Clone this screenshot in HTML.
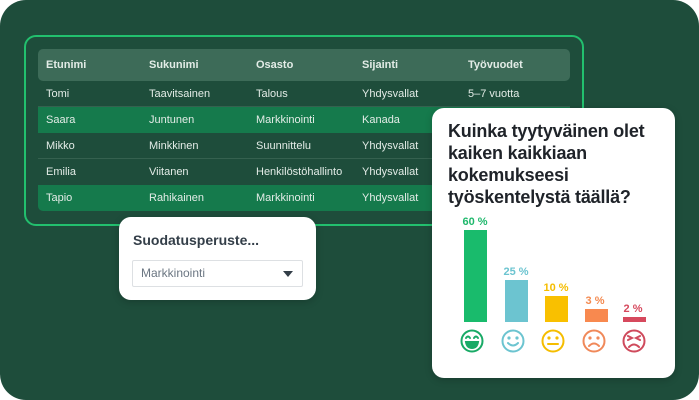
<!DOCTYPE html><html><head><style>
body{margin:0;width:699px;height:400px;background:#fff;font-family:"Liberation Sans",sans-serif;overflow:hidden}
.bg{position:absolute;left:0;top:0;width:699px;height:400px;background:#1e4d3b;border-radius:26px}
.tbl{position:absolute;left:24px;top:35px;width:556px;height:187px;border:2px solid #22c06e;border-radius:12px}
.hdr{position:absolute;left:38px;top:49px;width:532px;height:32px;background:#3d6b58;border-radius:5px}
.row{position:absolute;left:38px;width:532px;height:26px}
.hl{background:#157a4c}
.line{border-bottom:1px solid #35614f}
.c{position:absolute;font-size:11px;color:#e3ece7;line-height:26px}
.h{font-weight:bold;line-height:32px;font-size:11px}
.card{position:absolute;background:#fff;border-radius:12px;box-shadow:0 2px 8px rgba(0,0,0,.2)}
.lbl{position:absolute;font-size:11px;font-weight:bold;text-align:center;width:40px}
.bar{position:absolute;width:23px;bottom:56px}
</style></head><body>
<div class="bg"></div>
<div class="tbl"></div>
<div class="hdr"></div>
<div class="row line" style="top:81px;height:25px"></div>
<div class="row hl" style="top:107px"></div>
<div class="row line" style="top:133px;height:25px"></div>
<div class="row" style="top:159px"></div>
<div class="row hl" style="top:185px;border-radius:0 0 5px 5px"></div>
<div class="c h" style="left:46px;top:49px">Etunimi</div><div class="c h" style="left:149px;top:49px">Sukunimi</div><div class="c h" style="left:256px;top:49px">Osasto</div><div class="c h" style="left:362px;top:49px">Sijainti</div><div class="c h" style="left:468px;top:49px">Työvuodet</div>
<div class="c" style="left:46px;top:81px">Tomi</div><div class="c" style="left:149px;top:81px">Taavitsainen</div><div class="c" style="left:256px;top:81px">Talous</div><div class="c" style="left:362px;top:81px">Yhdysvallat</div><div class="c" style="left:468px;top:81px">5–7 vuotta</div>
<div class="c" style="left:46px;top:107px">Saara</div><div class="c" style="left:149px;top:107px">Juntunen</div><div class="c" style="left:256px;top:107px">Markkinointi</div><div class="c" style="left:362px;top:107px">Kanada</div>
<div class="c" style="left:46px;top:133px">Mikko</div><div class="c" style="left:149px;top:133px">Minkkinen</div><div class="c" style="left:256px;top:133px">Suunnittelu</div><div class="c" style="left:362px;top:133px">Yhdysvallat</div>
<div class="c" style="left:46px;top:159px">Emilia</div><div class="c" style="left:149px;top:159px">Viitanen</div><div class="c" style="left:256px;top:159px">Henkilöstöhallinto</div><div class="c" style="left:362px;top:159px">Yhdysvallat</div>
<div class="c" style="left:46px;top:185px">Tapio</div><div class="c" style="left:149px;top:185px">Rahikainen</div><div class="c" style="left:256px;top:185px">Markkinointi</div><div class="c" style="left:362px;top:185px">Yhdysvallat</div>

<div class="card" style="left:119px;top:217px;width:197px;height:83px">
<div style="position:absolute;left:14px;top:15px;font-size:14px;font-weight:bold;color:#333e48">Suodatusperuste...</div>
<div style="position:absolute;left:13px;top:43px;width:169px;height:25px;border:1px solid #dde0e3;border-radius:2px;font-size:12px;color:#6b7682;line-height:25px;text-indent:8px">Markkinointi<div style="position:absolute;right:9px;top:10px;width:0;height:0;border-left:5px solid transparent;border-right:5px solid transparent;border-top:6px solid #333e48"></div></div>
</div>

<div class="card" style="left:432px;top:108px;width:243px;height:270px">
<div style="position:absolute;left:16px;top:12px;font-size:18px;font-weight:bold;color:#1f2329;line-height:22px;letter-spacing:-0.2px">Kuinka tyytyväinen olet<br>kaiken kaikkiaan<br>kokemukseesi<br>työskentelystä täällä?</div>
<div class="lbl" style="left:23px;top:108px;color:#1fb86c">60 %</div>
<div class="bar" style="left:32px;height:92px;background:#19bb6c"></div>
<div class="lbl" style="left:64px;top:158px;color:#6cc4d0">25 %</div>
<div class="bar" style="left:73px;height:42px;background:#6cc4d0"></div>
<div class="lbl" style="left:104px;top:174px;color:#f5bd00">10 %</div>
<div class="bar" style="left:113px;height:26px;background:#f9c000"></div>
<div class="lbl" style="left:143px;top:187px;color:#f48a50">3 %</div>
<div class="bar" style="left:153px;height:13px;background:#f8894f"></div>
<div class="lbl" style="left:181px;top:195px;color:#d6495d">2 %</div>
<div class="bar" style="left:191px;height:5px;background:#d6495d"></div>
<svg style="position:absolute;left:0;top:0" width="243" height="270" fill="none" stroke-width="2" stroke-linecap="round">
<g stroke="#19aa66" transform="translate(40,233)"><circle r="10.5"/><path d="M-6 -3q2-3 4 0M2 -3q2-3 4 0"/><path d="M-6 1h12q-1 6-6 6t-6-6z" fill="#19aa66"/></g>
<g stroke="#6cc4d0" transform="translate(81,233)"><circle r="10.5"/><circle cx="-4" cy="-3" r=".6" fill="#6cc4d0"/><circle cx="4" cy="-3" r=".6" fill="#6cc4d0"/><path d="M-5 2q5 5 10 0"/></g>
<g stroke="#f5bd00" transform="translate(121,233)"><circle r="10.5"/><circle cx="-4" cy="-3" r=".6" fill="#f5bd00"/><circle cx="4" cy="-3" r=".6" fill="#f5bd00"/><path d="M-5 3h10"/></g>
<g stroke="#f0895a" transform="translate(162,233)"><circle r="10.5"/><circle cx="-4" cy="-3" r=".6" fill="#f0895a"/><circle cx="4" cy="-3" r=".6" fill="#f0895a"/><path d="M-5 5q5-5 10 0"/></g>
<g stroke="#cf4a5c" transform="translate(202,233)"><circle r="10.5"/><path d="M-6 -5l4 2-4 2M6 -5l-4 2 4 2M-5 6q5-5 10 0"/></g>
</svg>
</div>
</body></html>
